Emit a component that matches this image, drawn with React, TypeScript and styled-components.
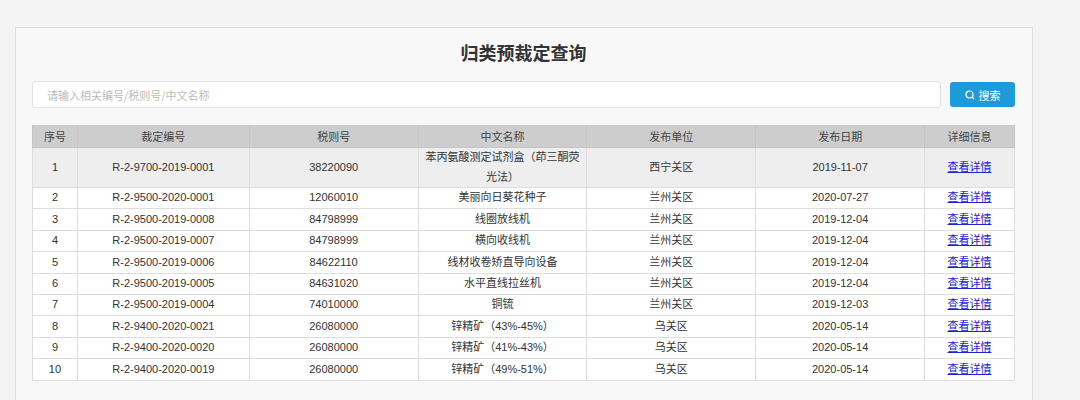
import React from "react";
import styled, { createGlobalStyle } from "styled-components";

const G = createGlobalStyle`
  body { margin: 0; background: #f4f4f4; font-family: "Microsoft YaHei", "Liberation Sans", "Noto Sans CJK SC", sans-serif; }
`;
const Page = styled.div` padding: 27px 47px 0 15px; height: 400px; box-sizing: border-box; overflow: hidden;`;
const Panel = styled.div`
  background: #f8f8f8; border: 1px solid #ddd; border-bottom: none; padding: 0 17px 20px 16px; min-height: 380px; box-sizing: border-box;
`;
const Title = styled.h1` margin: 0; padding-top: 11px; height: 53px; box-sizing: border-box; text-align: center; font-size: 18px; font-weight: bold; color: #333; font-family: "Noto Sans CJK SC", sans-serif;`;
const SearchRow = styled.div` display: flex; gap: 9px; align-items: center;`;
const Input = styled.input`
  flex: 1; height: 25px; border: 1px solid #e2e2e2; border-radius: 3px; background: #fff; padding: 0 14px; font-size: 11px; font-family: "Noto Sans CJK SC", sans-serif;
  &::placeholder { color: #bbb; }
`;
const Btn = styled.button`
  width: 65px; height: 25px; background: #1d9bd8; border: none; border-radius: 3px; color: #fff; font-size: 11px; display: flex; align-items: center; justify-content: center; gap: 4px; font-family: "Noto Sans CJK SC", sans-serif;
`;
const Table = styled.table` width: 983px; margin-top: 17px; border-collapse: collapse; background: #fff; font-size: 11px; color: #333; font-family: "Liberation Sans", "Noto Sans CJK SC", sans-serif;`;
const Th = styled.th` background: #cdcdcd; font-weight: normal; height: 22px; border: 1px solid #c4c4c4; border-top: none; padding: 0; color: #444;`;
const Tr = styled.tr<{ $hl?: boolean }>` background: ${p => p.$hl ? "#eeeeee" : "#fff"}; height: 21.4px;`;
const Td = styled.td` border: 1px solid #ddd; text-align: center; padding: 0 6px; line-height: 19.5px;`;
const A = styled.a` color: #2222cc; text-decoration: underline; cursor: pointer;`;

const rows = [
  ["1","R-2-9700-2019-0001","38220090","苯丙氨酸测定试剂盒（茚三酮荧光法）","西宁关区","2019-11-07"],
  ["2","R-2-9500-2020-0001","12060010","美丽向日葵花种子","兰州关区","2020-07-27"],
  ["3","R-2-9500-2019-0008","84798999","线圈放线机","兰州关区","2019-12-04"],
  ["4","R-2-9500-2019-0007","84798999","横向收线机","兰州关区","2019-12-04"],
  ["5","R-2-9500-2019-0006","84622110","线材收卷矫直导向设备","兰州关区","2019-12-04"],
  ["6","R-2-9500-2019-0005","84631020","水平直线拉丝机","兰州关区","2019-12-04"],
  ["7","R-2-9500-2019-0004","74010000","铜锍","兰州关区","2019-12-03"],
  ["8","R-2-9400-2020-0021","26080000","锌精矿（43%-45%）","乌关区","2020-05-14"],
  ["9","R-2-9400-2020-0020","26080000","锌精矿（41%-43%）","乌关区","2020-05-14"],
  ["10","R-2-9400-2020-0019","26080000","锌精矿（49%-51%）","乌关区","2020-05-14"],
];
const widths = [45,172,169,169,169,169,90];
const heads = ["序号","裁定编号","税则号","中文名称","发布单位","发布日期","详细信息"];

export default function App() {
  return (
    <Page>
      <G />
      <Panel>
        <Title>归类预裁定查询</Title>
        <SearchRow>
          <Input placeholder="请输入相关编号/税则号/中文名称" />
          <Btn>
            <svg width="10" height="10" viewBox="0 0 10 10" fill="none" stroke="#fff" strokeWidth="1.2"><circle cx="4.5" cy="4.5" r="3.5"/><path d="M7 7l2 2"/></svg>
            搜索
          </Btn>
        </SearchRow>
        <Table>
          <colgroup>{widths.map((w, i) => <col key={i} style={{ width: w }} />)}</colgroup>
          <thead><tr>{heads.map(h => <Th key={h}>{h}</Th>)}</tr></thead>
          <tbody>
            {rows.map((r, i) => (
              <Tr key={i} $hl={i === 0}>
                {r.map((c, j) => <Td key={j}>{c}</Td>)}
                <Td><A>查看详情</A></Td>
              </Tr>
            ))}
          </tbody>
        </Table>
      </Panel>
    </Page>
  );
}
